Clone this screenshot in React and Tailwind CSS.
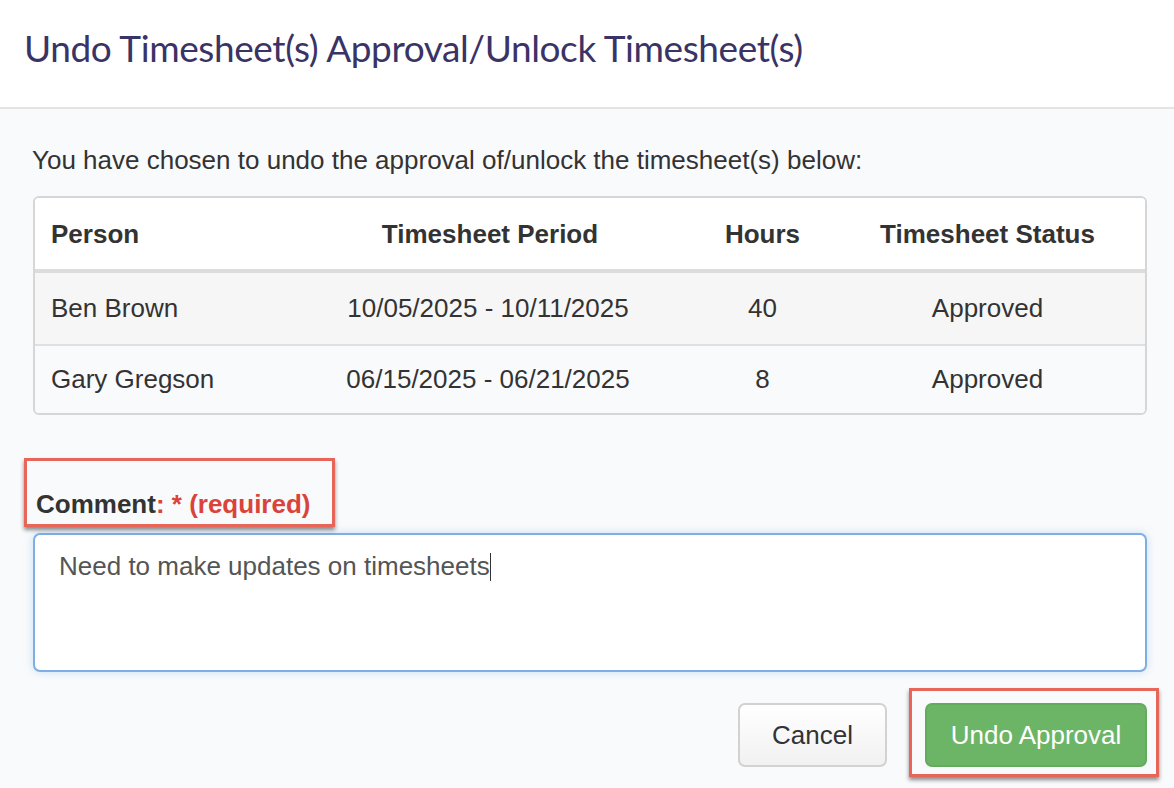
import React from "react";

const rows = [
  { person: "Ben Brown", period: "10/05/2025 - 10/11/2025", hours: "40", status: "Approved" },
  { person: "Gary Gregson", period: "06/15/2025 - 06/21/2025", hours: "8", status: "Approved" },
];

export default function App() {
  return (
    <div className="w-[1174px] h-[788px] overflow-hidden bg-[#f9fafc] font-['Liberation_Sans',Arial,sans-serif] text-[#333]">
      <div className="h-[109px] bg-white border-b-2 border-[#e4e4e4] flex items-center px-[24px]">
        <h1 className="font-['Lato',sans-serif] text-[37px] text-[#3a3366] tracking-[-0.4px] -mt-[12px]">
          Undo Timesheet(s) Approval/Unlock Timesheet(s)
        </h1>
      </div>

      <div className="pl-[33px] pr-[27px] pt-[36px]">
        <p className="text-[26px] leading-[30px] -ml-[1px]">You have chosen to undo the approval of/unlock the timesheet(s) below:</p>

        <div className="mt-[21px] border-2 border-[#d6d6d6] rounded-[6px] overflow-hidden">
          <table className="w-full border-collapse text-[26px]">
            <thead>
              <tr className="bg-white h-[73px] border-b-4 border-[#dcdcdc]">
                <th className="text-left font-bold pl-[16px] w-[250px] pt-[2px]">Person</th>
                <th className="font-bold w-[410px] pt-[2px]">Timesheet Period</th>
                <th className="font-bold w-[135px] pt-[2px]">Hours</th>
                <th className="font-bold pt-[2px]">Timesheet Status</th>
              </tr>
            </thead>
            <tbody>
              {rows.map((r, i) => (
                <tr key={r.person} className={i === 0 ? "bg-[#f6f6f6] h-[74px] border-b-2 border-[#e0e0e0]" : "bg-[#f9fafc] h-[68px]"}>
                  <td className="pl-[16px]">{r.person}</td>
                  <td className="text-center pr-[4px]">{r.period}</td>
                  <td className="text-center">{r.hours}</td>
                  <td className="text-center">{r.status}</td>
                </tr>
              ))}
            </tbody>
          </table>
        </div>

        <div className="mt-[43px]">
          <div className="inline-block -ml-[9px] pl-[9px] pr-[22px] pt-[28px] pb-[4px] border-[3px] border-[#e8655a] shadow-[0_3px_4px_rgba(0,0,0,0.45)]">
            <span className="text-[26px] font-bold leading-[30px]">
              Comment<span className="text-[#d9443a]">: * (required)</span>
            </span>
          </div>
        </div>

        <div className="mt-[6px] h-[139px] bg-white border-2 border-[#7eaee3] rounded-[7px] shadow-[0_0_8px_rgba(102,175,233,0.35)] px-[24px] pt-[16px]">
          <span className="text-[26px] leading-[30px] text-[#555]">Need to make updates on timesheets</span>
          <span className="inline-block w-[1px] h-[28px] bg-[#333] align-[-6px]"></span>
        </div>

        <div className="mt-[16px] flex justify-end items-start">
          <button className="mt-[15px] w-[149px] h-[64px] bg-gradient-to-b from-white to-[#f1f1f1] border-2 border-[#d2d2d2] rounded-[7px] text-[26px] text-[#333]">
            Cancel
          </button>
          <div className="ml-[22px] -mr-[12px] pl-[13px] pr-[9px] pt-[12px] pb-[7px] border-[3px] border-[#e8655a] shadow-[0_3px_4px_rgba(0,0,0,0.45)]">
            <button className="w-[222px] h-[64px] bg-[#6db566] border-2 border-[#64ab5d] rounded-[7px] text-[26px] text-white">
              Undo Approval
            </button>
          </div>
        </div>
      </div>
    </div>
  );
}
